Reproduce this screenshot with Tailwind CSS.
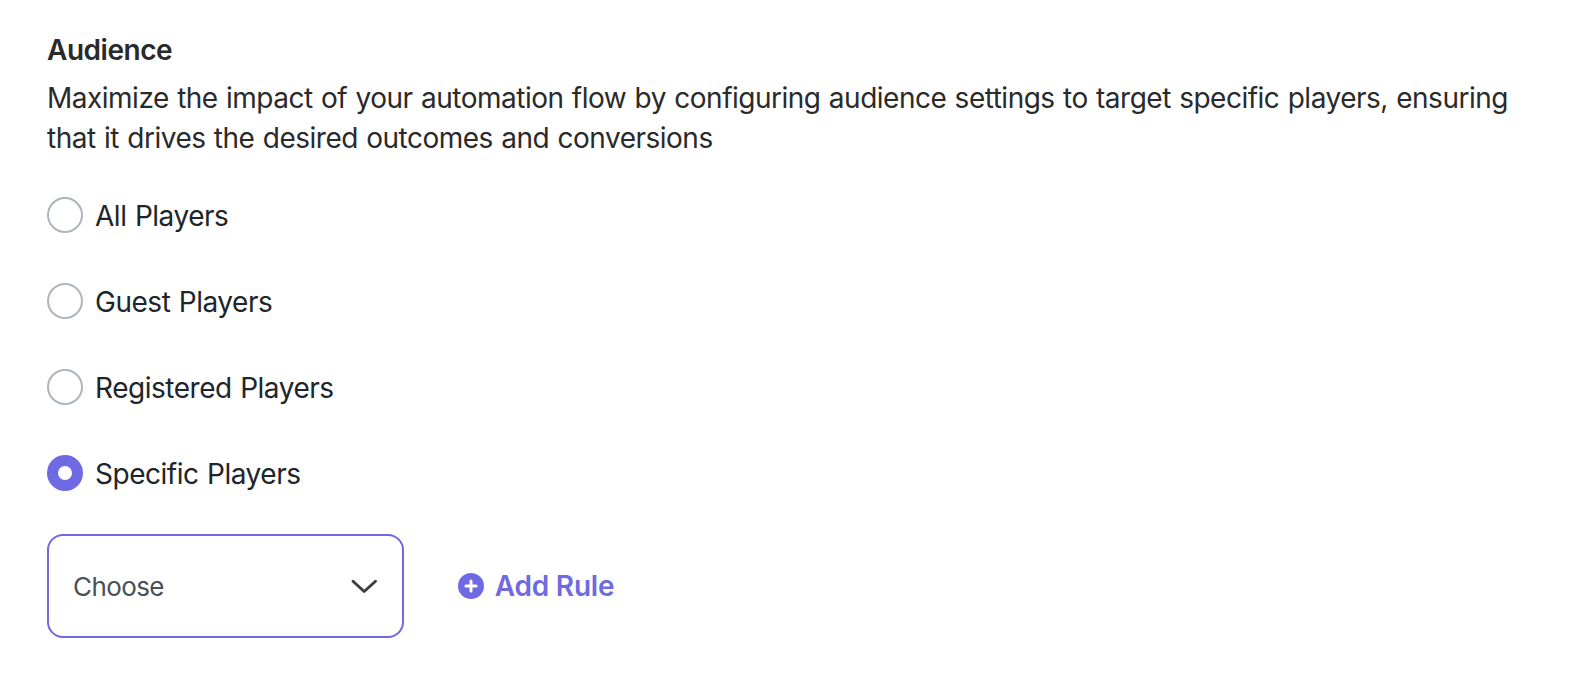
<!DOCTYPE html>
<html lang="en"><head><meta charset="utf-8"><title>Audience</title>
<script src="https://cdn.jsdelivr.net/npm/@tailwindcss/browser@4"></script></head>
<body class="bg-white text-[#212529] font-['Inter',sans-serif] text-[28px] tracking-[-0.47px] [word-spacing:1px]">
<main class="pl-[47px] pt-[30px]">
<h1 class="text-[28px] leading-10 font-semibold text-[#2a2a2a]">Audience</h1>
<p class="mt-2 leading-10 whitespace-nowrap text-[#2a2a2a] tracking-[-0.5px]">Maximize the impact of your automation flow by configuring audience settings to target specific players, ensuring<br>that it drives the desired outcomes and conversions</p>
<div class="mt-[37px] flex flex-col gap-[46px]">
<label class="flex h-10 items-center gap-3"><span class="size-9 rounded-full border-2 border-[#adb5bd]"></span><span class="pt-0.5">All Players</span></label>
<label class="flex h-10 items-center gap-3"><span class="size-9 rounded-full border-2 border-[#adb5bd]"></span><span class="pt-0.5">Guest Players</span></label>
<label class="flex h-10 items-center gap-3"><span class="size-9 rounded-full border-2 border-[#adb5bd]"></span><span class="pt-0.5">Registered Players</span></label>
<label class="flex h-10 items-center gap-3"><span class="flex size-9 items-center justify-center rounded-full bg-[#6f69e3]"><span class="size-[14px] rounded-full bg-white"></span></span><span class="pt-0.5">Specific Players</span></label>
</div>
<div class="mt-[41px] flex items-center">
<button class="flex h-[104px] w-[357px] items-center justify-between rounded-2xl border-2 border-[#6f69e3] px-6 text-[26px] tracking-[-0.6px] text-[#495057]"><span>Choose</span><svg class="h-4 w-7" viewBox="0 0 28 16" fill="none" stroke="#3d3d3d" stroke-width="2.9" stroke-linecap="round" stroke-linejoin="round"><path d="M3 3.2L14.2 13.5L25.5 3.2"/></svg></button>
<button class="ml-[54.4px] flex items-center gap-[10.3px] font-semibold tracking-[-0.2px] text-[#6f69e3]"><svg class="size-[26px]" viewBox="0 0 26 26"><circle cx="13" cy="13" r="13" fill="#6f69e3"/><path d="M13 7.9v10.2M7.9 13h10.2" stroke="white" stroke-width="3" stroke-linecap="round"/></svg><span>Add Rule</span></button>
</div></main></body></html>
